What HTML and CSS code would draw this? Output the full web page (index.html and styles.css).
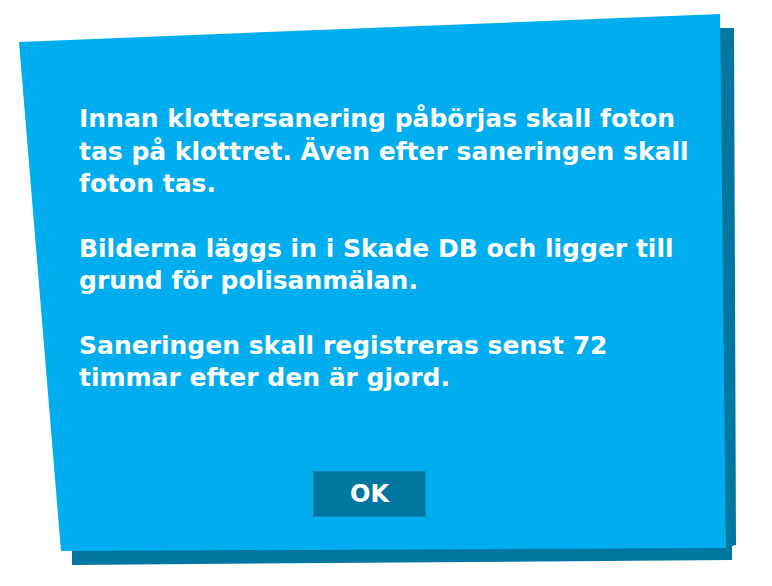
FILE: index.html
```html
<!DOCTYPE html>
<html>
<head>
<meta charset="utf-8">
<link rel="stylesheet" href="styles.css">
</head>
<body>
<div class="dialog">
  <svg class="shape" width="772" height="586" viewBox="0 0 772 586">
    <polygon class="shadow" points="700,28 734,28 736,545 732,546 732,560 72,565 72,548"/>
    <polygon class="card" points="19,42 720,14 726,548 61,551"/>
  </svg>
  <div class="content">
    <p class="para">Innan klottersanering påbörjas skall foton<br>tas på klottret. Även efter saneringen skall<br>foton tas.</p>
    <p class="para">Bilderna läggs in i Skade DB och ligger till<br>grund för polisanmälan.</p>
    <p class="para">Saneringen skall registreras senst 72<br>timmar efter den är gjord.</p>
  </div>
  <div class="actions">
    <button class="ok">OK</button>
  </div>
</div>
</body>
</html>
```
FILE: styles.css
```css
html, body {
  margin: 0;
  padding: 0;
  background: #ffffff;
}
.dialog {
  position: relative;
  width: 772px;
  height: 586px;
  display: flex;
  flex-direction: column;
  font-family: "DejaVu Sans", "Liberation Sans", sans-serif;
}
.shape {
  position: absolute;
  left: 0;
  top: 0;
}
.shadow { fill: #0076a1; }
.card { fill: #00adee; }
.content {
  position: relative;
  padding: 103px 40px 0 79px;
  width: 653px;
}
.para {
  margin: 0 0 32px 0;
  color: #ffffff;
  font-weight: 700;
  font-size: 25px;
  line-height: 32.5px;
  white-space: nowrap;
}
.actions {
  position: relative;
  display: flex;
  justify-content: flex-start;
  padding-left: 313px;
  margin-top: 44px;
}
.ok {
  width: 113px;
  height: 46px;
  background: #0076a1;
  border: 1px solid #1489b3;
  color: #ffffff;
  font-family: "DejaVu Sans", "Liberation Sans", sans-serif;
  font-weight: 700;
  font-size: 24px;
  padding: 0;
}
```
